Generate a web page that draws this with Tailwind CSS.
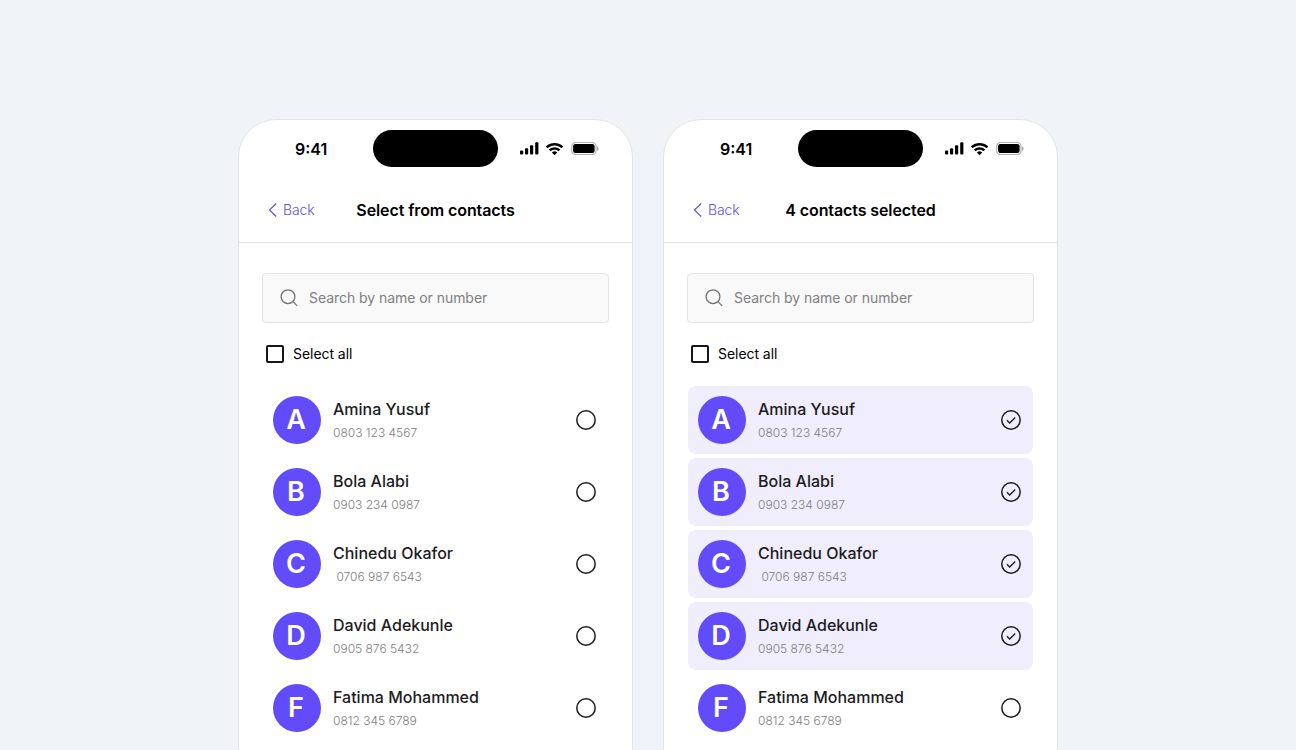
<!DOCTYPE html>
<html lang="en">
<head>
<meta charset="utf-8">
<title>Select contacts</title>
<script src="https://cdn.jsdelivr.net/npm/@tailwindcss/browser@4"></script>
</head>
<body class="h-[750px] overflow-hidden bg-[#f0f4f9] font-['Inter','Liberation_Sans',sans-serif] text-black antialiased">
<svg class="hidden">
  <symbol id="signal" viewBox="0 0 19 13"><rect x="0" y="8.5" width="3.2" height="4" rx="1"/><rect x="5" y="6.2" width="3.2" height="6.3" rx="1"/><rect x="10" y="3.3" width="3.2" height="9.2" rx="1"/><rect x="15.2" y="0.3" width="3.2" height="12.2" rx="1"/></symbol>
  <symbol id="wifi" viewBox="0 0 17 12"><path d="M8.57 2.47c2.49 0 4.88.92 6.68 2.58.14.12.36.12.49 0l1.3-1.27a.35.35 0 0 0 0-.5C12.31-1.09 4.83-1.09.09 3.28a.35.35 0 0 0 0 .5l1.3 1.27c.14.13.36.13.5 0 1.8-1.66 4.19-2.58 6.68-2.58Zm0 4.22c1.36 0 2.67.49 3.68 1.39.13.13.35.13.49 0l1.29-1.28a.36.36 0 0 0 0-.51 7.97 7.97 0 0 0-10.92 0 .36.36 0 0 0 0 .51l1.29 1.28c.14.13.36.13.49 0a5.51 5.51 0 0 1 3.68-1.39Zm2.52 2.8a.35.35 0 0 1-.1.27l-2.18 2.14a.36.36 0 0 1-.5 0L6.14 9.76a.34.34 0 0 1 .01-.51 3.76 3.76 0 0 1 4.83 0 .35.35 0 0 1 .11.24Z"/></symbol>
  <symbol id="battery" viewBox="0 0 28 13"><rect x=".7" y=".5" width="24.300" height="12" rx="3.8" fill="none" stroke="#000" stroke-width="1.200" stroke-opacity=".3"/><path d="M26.200 4.600v4.200c.8-.35 1.35-1.200 1.350-2.100s-.55-1.750-1.350-2.100Z" fill-opacity=".4"/><rect x="2.100" y="1.900" width="21.500" height="9.200" rx="2.300"/></symbol>
  <symbol id="back" viewBox="0 0 10 16"><path d="M8.200 1.500 1.500 8l6.700 6.500" fill="none" stroke="#6950d5" stroke-width="1.200"/></symbol>
  <symbol id="search" viewBox="0 0 18 18"><g fill="none" stroke="#737373" stroke-width="1.300"><circle cx="8" cy="7.700" r="6.900"/><path d="m12.900 12.600 4.300 4.300"/></g></symbol>
  <symbol id="open" viewBox="0 0 20 20"><circle cx="10" cy="10" r="9.200" fill="none" stroke="#1c1c1e" stroke-width="1.500"/></symbol>
  <symbol id="checked" viewBox="0 0 20 20"><g fill="none" stroke="#1c1c1e" stroke-width="1.500"><circle cx="10" cy="10" r="9.200"/><path d="m5.900 10.200 2.800 2.800 5.500-5.500" stroke-width="1.300"/></g></symbol>
</svg>
<main class="flex justify-center gap-[30px] pt-[119px]" id="screens"></main>
<script>
const contacts = [
  ['Amina Yusuf', '0803 123 4567'],
  ['Bola Alabi', '0903 234 0987'],
  ['Chinedu Okafor', ' 0706 987 6543'],
  ['David Adekunle', '0905 876 5432'],
  ['Fatima Mohammed', '0812 345 6789'],
];
const row = ([name, phone], on) => `
  <li class="flex h-[68px] items-center rounded-lg px-2.5 ${on ? 'bg-[#f0edfd]' : ''}">
    <span class="flex size-12 items-center justify-center rounded-full bg-[#614bfa] pr-0.5 text-[27px] font-semibold text-white">${name[0]}</span>
    <div class="ml-3 flex flex-1 flex-col pt-0.5">
      <span class="text-base leading-6 font-medium text-[#1c1c1e]">${name}</span>
      <span class="text-xs leading-6 font-light whitespace-pre text-[#808080]">${phone}</span>
    </div>
    <svg class="mr-0.5 size-5"><use href="#${on ? 'checked' : 'open'}"/></svg>
  </li>`;
const screen = (title, selected) => `
  <section class="h-[631px] w-[395px] overflow-hidden rounded-t-[38px] border border-b-0 border-[#e2e4e6] bg-white">
    <div class="grid h-[57px] grid-cols-[134px_125px_134px] items-center">
      <span class="pl-[56px] text-base font-semibold">9:41</span>
      <span class="h-[37px] rounded-full bg-black"></span>
      <div class="flex items-center pl-[22px]">
        <svg class="h-[13px] w-[19px]"><use href="#signal"/></svg>
        <svg class="ml-[7px] h-3 w-[17px]"><use href="#wifi"/></svg>
        <svg class="ml-2 h-[13px] w-7"><use href="#battery"/></svg>
      </div>
    </div>
    <header class="grid h-[66px] grid-cols-[90px_1fr_90px] items-center border-b border-[#e2e2e2] pt-px">
      <div class="flex items-center gap-[5px] pl-[29px] text-sm font-light tracking-[-0.1px] text-[#6950d5]"><svg class="h-4 w-2.5"><use href="#back"/></svg><span>Back</span></div>
      <h1 class="text-center text-base font-semibold tracking-[-0.1px]">${title}</h1>
    </header>
    <div class="px-[23px] pt-[30px]">
      <div class="flex h-[50px] items-center rounded border border-[#e4e4e4] bg-[#f9f9f9] pl-[17px]">
        <svg class="size-[18px]"><use href="#search"/></svg><span class="ml-[11px] text-sm tracking-[-0.05px] text-[#808080]">Search by name or number</span>
      </div>
      <label class="mt-[22px] flex h-[18px] items-center pl-1 text-sm tracking-[-0.05px]"><span class="size-[18px] rounded-xs border-2 border-[#161616]"></span><span class="ml-[9px]">Select all</span></label>
      <ul class="mx-px mt-[23px] flex flex-col gap-1">${contacts.map((c, i) => row(c, i < selected)).join('')}</ul>
    </div>
  </section>`;
document.getElementById('screens').innerHTML = screen('Select from contacts', 0) + screen('4 contacts selected', 4);
</script>
</body>
</html>
